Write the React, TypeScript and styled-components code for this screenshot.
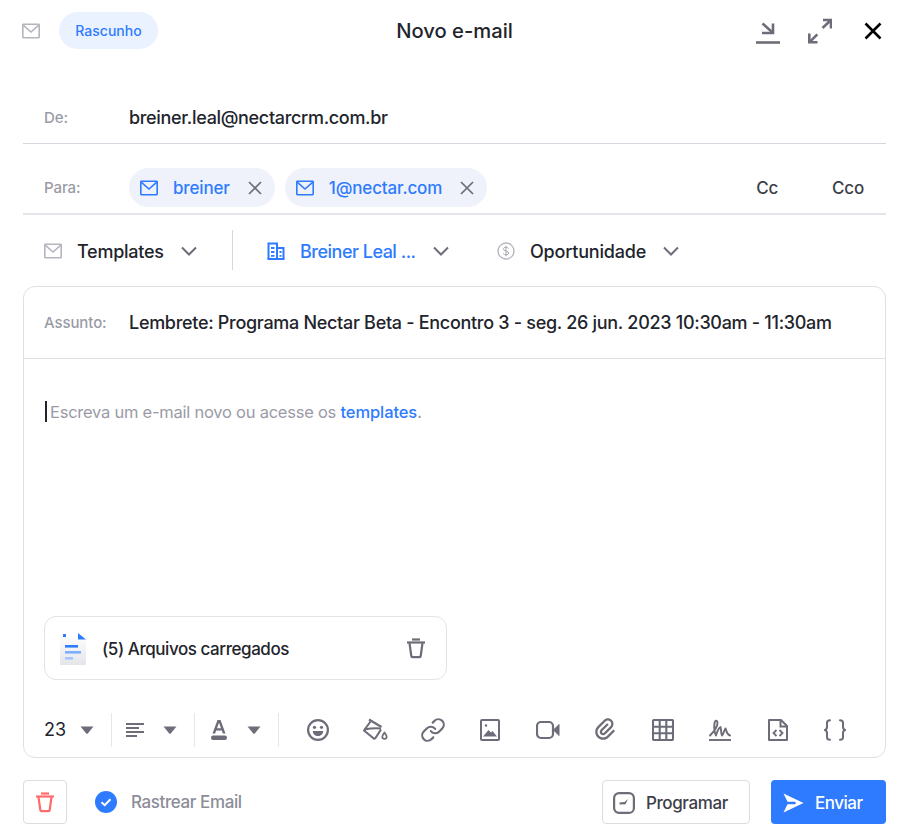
import React from "react";
import styled, { createGlobalStyle } from "styled-components";
import { Link as LinkIcon } from "lucide-react";
import { RiAttachment2 } from "react-icons/ri";

const Global = createGlobalStyle`
  html, body { margin: 0; padding: 0; background: #fff; }
  body { font-family: Inter, "Liberation Sans", sans-serif; color: #22242c; }
  * { box-sizing: border-box; }
  svg { flex: none; display: block; }
`;

const Page = styled.div`
  width: 907px;
  height: 839px;
  padding: 0 21px 0 23px;
  overflow: hidden;
`;

const Header = styled.header`
  height: 61px;
  display: flex;
  align-items: center;
  margin-bottom: 31px;
`;

const HeaderLeft = styled.div`
  display: flex;
  align-items: center;
  gap: 19px;
  flex: 1;
  margin-left: -1px;
`;

const Pill = styled.span`
  width: 99px;
  height: 37px;
  border-radius: 19px;
  background: #ebf2ff;
  color: #2e7bff;
  font-size: 14px;
  font-weight: 500;
  display: flex;
  align-items: center;
  justify-content: center;
`;

const Title = styled.h1`
  margin: 0 0 0 4px;
  font-size: 20.2px;
  line-height: 24px;
  font-weight: 500;
  flex: none;
  width: 300px;
  text-align: center;
  color: #22242c;
`;

const HeaderRight = styled.div`
  flex: 1;
  display: flex;
  justify-content: flex-end;
  align-items: center;
  gap: 28px;
  padding-right: 3px;
`;

const CloseButton = styled.span`
  margin-left: 3px;
`;

const FieldRow = styled.div<{ $h: number; $thick?: boolean; $pt?: number }>`
  height: ${(p) => p.$h}px;
  padding-top: ${(p) => p.$pt ?? 0}px;
  display: flex;
  align-items: center;
  border-bottom: ${(p) => (p.$thick ? "2px solid #e4e4ea" : "1px solid #d6d6de")};
`;

const Label = styled.span`
  width: 106px;
  padding-left: 21px;
  font-size: 15px;
  letter-spacing: -0.1px;
  font-weight: 500;
  color: #9a9ba6;
  flex: none;
`;

const Value = styled.span`
  font-size: 18px;
  letter-spacing: -0.32px;
  font-weight: 500;
  color: #22242c;
  white-space: nowrap;
`;

const Chips = styled.div`
  display: flex;
  gap: 10px;
  flex: 1;
`;

const Chip = styled.div`
  height: 39px;
  border-radius: 20px;
  background: #eff2fa;
  padding: 0 12px 0 11px;
  display: flex;
  align-items: center;
  color: #2e7bff;
  font-size: 17px;
  letter-spacing: -0.15px;
  font-weight: 500;
  gap: 15px;
`;

const ChipClose = styled.span`
  display: flex;
  margin-left: 2px;
  color: #6c6d78;
`;

const CopyLinks = styled.div`
  display: flex;
  gap: 54px;
  padding-right: 22px;
  font-size: 17px;
  letter-spacing: -0.2px;
  font-weight: 500;
  color: #3d3e48;
`;

const SelectRow = styled.div`
  height: 55px;
  padding: 15px 0 0 21px;
  display: flex;
  align-items: flex-start;
  margin-bottom: 16px;
`;

const Select = styled.div<{ $blue?: boolean; $w: number; $ls: number }>`
  width: ${(p) => p.$w}px;
  flex: none;
  height: 42px;
  display: flex;
  align-items: center;
  gap: 15px;
  font-size: 18px;
  letter-spacing: ${(p) => p.$ls}px;
  font-weight: 500;
  white-space: nowrap;
  color: ${(p) => (p.$blue ? "#2e7bff" : "#22242c")};
`;

const ChevronWrap = styled.span`
  margin-left: 2px;
`;

const SelectDivider = styled.div`
  width: 1px;
  height: 40px;
  background: #d6d6de;
  margin: 0 34px 0 0;
  flex: none;
`;

const Card = styled.section`
  height: 472px;
  border: 1.5px solid #dfdfe6;
  border-radius: 12px;
  display: flex;
  flex-direction: column;
`;

const Subject = styled.div`
  height: 72px;
  flex: none;
  display: flex;
  align-items: center;
  border-bottom: 1.5px solid #dfdfe6;
`;

const SubjectLabel = styled(Label)`
  padding-left: 20px;
  width: 105px;
`;

const SubjectValue = styled.span`
  font-size: 18px;
  letter-spacing: -0.3px;
  font-weight: 500;
  white-space: nowrap;
  color: #22242c;
`;

const Editor = styled.div`
  flex: 1;
  padding: 42px 20px 0;
  font-size: 16.5px;
  letter-spacing: -0.24px;
  line-height: 20px;
  color: #9a9ba6;
  display: flex;
  flex-direction: column;
`;

const Placeholder = styled.div`
  display: flex;
  align-items: center;
  white-space: pre;
`;

const Caret = styled.span`
  display: inline-block;
  width: 2px;
  height: 21px;
  background: #22242c;
  margin: 0 3px 0 1px;
`;

const TemplateLink = styled.span`
  color: #2e7bff;
  font-weight: 500;
  letter-spacing: -0.1px;
`;

const FileCard = styled.div`
  margin-top: auto;
  margin-bottom: 20px;
  width: 403px;
  height: 64px;
  border: 1.5px solid #e2e2e9;
  border-radius: 12px;
  padding: 0 20px 0 15px;
  display: flex;
  align-items: center;
`;

const FileName = styled.span`
  margin-left: 16px;
  padding-top: 2px;
  font-size: 17px;
  letter-spacing: -0.44px;
  font-weight: 500;
  color: #22242c;
  flex: 1;
`;

const Toolbar = styled.div`
  height: 57px;
  flex: none;
  display: flex;
  align-items: center;
  padding: 2px 0 0 20px;
`;

const ToolGroup = styled.div<{ $w: number; $pl?: number }>`
  width: ${(p) => p.$w}px;
  height: 34px;
  flex: none;
  display: flex;
  align-items: center;
  justify-content: space-between;
  padding: 0 17px 0 ${(p) => p.$pl ?? 0}px;
  border-right: 1.5px solid #e6e6ec;
`;

const FontSize = styled.span`
  font-size: 18px;
  color: #22242c;
`;

const ToolIcon = styled.div`
  width: 57.5px;
  height: 34px;
  flex: none;
  display: flex;
  align-items: center;
  justify-content: center;
  color: #6c6d78;
`;

const ToolIcons = styled.div`
  display: flex;
  margin-left: 10px;
`;

const Footer = styled.footer`
  margin-top: 22px;
  display: flex;
  align-items: center;
  height: 44px;
`;

const TrashButton = styled.button`
  width: 44px;
  height: 44px;
  padding: 0;
  border: 1.5px solid #dcdce3;
  border-radius: 4px;
  background: #fff;
  display: flex;
  align-items: center;
  justify-content: center;
`;

const Track = styled.div`
  margin-left: 28px;
  display: flex;
  align-items: center;
  gap: 14px;
  flex: 1;
  font-size: 17px;
  letter-spacing: -0.4px;
  font-weight: 500;
  color: #8c8d98;
`;

const ScheduleButton = styled.button`
  width: 148px;
  height: 44px;
  border: 1.5px solid #dcdce3;
  border-radius: 4px;
  background: #fff;
  display: flex;
  align-items: center;
  gap: 11px;
  font: 500 17px Inter, sans-serif;
  letter-spacing: -0.4px;
  color: #3d3e48;
  padding: 1px 0 0 10px;
`;

const SendButton = styled.button`
  width: 115px;
  height: 44px;
  margin-left: 21px;
  border: 0;
  border-radius: 4px;
  background: #2e7bff;
  display: flex;
  align-items: center;
  gap: 11px;
  font: 500 17px Inter, sans-serif;
  letter-spacing: -0.5px;
  color: #fff;
  padding: 1px 0 0 12px;
`;

const GREY = "#6c6d78";

const MailIcon = ({ color = "#b4b5be", sw = 1.6 }: { color?: string; sw?: number }) => (
  <svg width="18" height="18" viewBox="0 0 18 18" fill="none">
    <rect x="0.8" y="2.3" width="16.4" height="13.4" rx="0.6" stroke={color} strokeWidth={sw} />
    <path d="M1.2 3.2 9 10l7.8-6.8" stroke={color} strokeWidth={sw} />
  </svg>
);

const XIcon = ({ size = 16, color = "currentColor", sw = 1.7 }: { size?: number; color?: string; sw?: number }) => (
  <svg width={size} height={size} viewBox="0 0 16 16" fill="none">
    <path d="M2 2l12 12M14 2 2 14" stroke={color} strokeWidth={sw} />
  </svg>
);

const Chevron = () => (
  <svg width="16" height="10" viewBox="0 0 16 10" fill="none">
    <path d="M1 1.5l7 7 7-7" stroke={GREY} strokeWidth="2" />
  </svg>
);

const Minimize = () => (
  <svg width="24" height="26" viewBox="0 0 24 26" fill="none" stroke={GREY}>
    <path d="M6.5 5.5l9.5 8.5" strokeWidth="2.6" />
    <path d="M17 5.500V15H6" strokeWidth="2.6" />
    <path d="M0 24.500h24" strokeWidth="2.6" />
  </svg>
);

const Expand = () => (
  <svg width="24" height="26" viewBox="0 0 24 26" fill="none" stroke={GREY} strokeWidth="2.6">
    <path d="M15 2h8v8.500" />
    <path d="M22.500 2.500l-8 7.500" />
    <path d="M1.300 15.500v8.800h8.200" />
    <path d="M1.800 23.800l7.500-7.500" />
  </svg>
);

const Building = () => (
  <svg width="18" height="18" viewBox="0 0 18 18" fill="none" stroke="#2e7bff" strokeWidth="2">
    <path d="M1.500 17V1.500h8.500V17" />
    <path d="M10 6h6.500v11" />
    <path d="M0.500 17h17" />
    <path d="M4 6h3.500M4 10h3.500M4 13.800h3.500M12.500 10h2M12.500 13.800h2" strokeWidth="1.8" />
  </svg>
);

const Dollar = () => (
  <svg width="18" height="18" viewBox="0 0 18 18" fill="none">
    <circle cx="9" cy="9" r="8" stroke="#b4b5be" strokeWidth="1.3" />
    <path d="M11.500 6.600C11 5.600 10 5.200 9 5.200c-1.500 0-2.500.7-2.500 1.900 0 2.600 5.100 1.300 5.100 3.900 0 1.200-1.100 1.900-2.600 1.900-1.200 0-2.200-.5-2.700-1.500M9 3.800v10.400" stroke="#a4a5b0" strokeWidth="1" />
  </svg>
);

const DocIcon = () => (
  <svg width="26" height="33" viewBox="0 0 26 33">
    <defs>
      <linearGradient id="docbg" x1="0" y1="0" x2="0" y2="1">
        <stop offset="0" stopColor="#ffffff" />
        <stop offset="1" stopColor="#e4e5e9" />
      </linearGradient>
    </defs>
    <path d="M0 2h18l8 7v24H0z" fill="url(#docbg)" />
    <rect x="3" y="2" width="3" height="3" fill="#2e7bff" />
    <path d="M18 1l8 6.500h-8z" fill="#2e7bff" />
    <rect x="5" y="13" width="13" height="2.6" fill="#2e7bff" />
    <rect x="5" y="19" width="16" height="2.6" fill="#7fadff" />
    <rect x="5" y="25" width="8" height="2.6" fill="#a5c5ff" />
  </svg>
);

const Trash = ({ color = GREY }: { color?: string }) => (
  <svg width="20" height="21" viewBox="0 0 20 21" fill="none" stroke={color} strokeWidth="2.2">
    <path d="M1 4.500h18" />
    <path d="M6 1.500h8" />
    <path d="M3.500 5l1.800 13c.1.800.6 1.200 1.300 1.200h6.800c.7 0 1.200-.4 1.300-1.200L16.500 5" strokeLinejoin="round" />
  </svg>
);

const Caret3 = () => (
  <svg width="14" height="8" viewBox="0 0 14 8">
    <path d="M0.500 0.500h13L8 7.200a1.300 1.300 0 0 1-2 0z" fill={GREY} />
  </svg>
);

const AlignIcon = () => (
  <svg width="18" height="14" viewBox="0 0 18 14" fill="none" stroke={GREY} strokeWidth="2">
    <path d="M0 1h18M0 5h13M0 9h18M0 13h11" />
  </svg>
);

const FontColor = () => (
  <svg width="18" height="20" viewBox="0 0 18 20">
    <path fillRule="evenodd" d="M2.500 13.500 7.500 0h3l5 13.500h-2.600L11.800 10.400H6.200L5.100 13.500zM7 8.200h4L9 2.800z" fill={GREY} />
    <rect x="1" y="15.500" width="16" height="4.500" rx="2.200" fill={GREY} />
  </svg>
);

const Smile = () => (
  <svg width="24" height="24" viewBox="0 0 24 24" fill="none">
    <circle cx="12" cy="12" r="9.900" stroke={GREY} strokeWidth="2.2" />
    <circle cx="8.500" cy="9.300" r="1.600" fill={GREY} />
    <circle cx="15.500" cy="9.300" r="1.600" fill={GREY} />
    <path d="M6.800 13h10.400c0 3-2.300 5-5.200 5s-5.200-2-5.200-5z" fill={GREY} />
  </svg>
);

const Bucket = () => (
  <svg width="26" height="24" viewBox="0 0 26 24" fill="none" stroke={GREY} strokeWidth="2.1" strokeLinejoin="round">
    <path d="M7 1.500 19.500 9" />
    <path d="M8.500 3.500 2 12.500l9.500 7.800c.7.500 1.500.4 2-.3L19 11.500" />
    <path d="M2.500 11.500c5-1 11-1.500 16.500-1" />
    <path d="M22.500 14.500c1.300 2 2.200 3.100 2.200 4.200a2.200 2.200 0 0 1-4.400 0c0-1.100.9-2.200 2.200-4.200z" strokeWidth="1.7" />
  </svg>
);

const ImageIcon = () => (
  <svg width="20" height="22" viewBox="0 0 20 22" fill="none">
    <rect x="1" y="1" width="18" height="20" rx="1" stroke={GREY} strokeWidth="2" />
    <circle cx="6" cy="6.500" r="1.200" fill={GREY} />
    <path d="M3 17.500l5.500-6.500 2.500 2.500 1.500-1.500 4.500 5.500z" fill={GREY} />
  </svg>
);

const VideoIcon = () => (
  <svg width="24" height="20" viewBox="0 0 24 20" fill="none">
    <rect x="1" y="2" width="16" height="16" rx="4" stroke={GREY} strokeWidth="2.2" />
    <path d="M17.500 10l5.500-5.500v11z" fill={GREY} stroke={GREY} strokeWidth="1" />
  </svg>
);

const TableIcon = () => (
  <svg width="22" height="22" viewBox="0 0 22 22" fill="none" stroke={GREY} strokeWidth="2.1">
    <rect x="1" y="1" width="20" height="20" rx="1" />
    <path d="M1 7.700h20M1 14.300h20M7.700 1v20M14.300 1v20" />
  </svg>
);

const SignIcon = () => (
  <svg width="22" height="22" viewBox="0 0 22 22" fill="none" stroke={GREY} strokeWidth="1.9">
    <path d="M0 21h22" />
    <path d="M1 16.500C4.500 13 8.500 8 8.500 4 8.500 1 6 1 5.500 4.500c-.5 3.500-.3 8.500 1.500 12 1-4 2.500-7 4.500-8.500.8 2 .3 6.500 1.500 8.500 1.500-.5 2-5.500 3.500-7 1 2 1 6 4.500 7" strokeLinecap="round" strokeLinejoin="round" />
  </svg>
);

const FileCode = () => (
  <svg width="20" height="22" viewBox="0 0 20 22" fill="none" stroke={GREY} strokeWidth="2">
    <path d="M1 1h12l6 6v14H1z" strokeLinejoin="round" />
    <path d="M12.500 1.500V7.500h6" />
    <path d="M8.500 11l-3 3 3 3M11.500 11l3 3-3 3" strokeWidth="1.8" />
  </svg>
);

const Braces = () => (
  <svg width="22" height="22" viewBox="0 0 22 22" fill="none" stroke={GREY} strokeWidth="2" strokeLinecap="round">
    <path d="M6 1.200C3.800 1.200 3 2 3 3.800v4c0 1.800-.6 2.700-2 3.200 1.400.5 2 1.400 2 3.200v4c0 1.800.8 2.600 3 2.600" />
    <path d="M16 1.200c2.200 0 3 .8 3 2.600v4c0 1.800.6 2.700 2 3.200-1.400.5-2 1.400-2 3.200v4c0 1.800-.8 2.600-3 2.600" />
  </svg>
);

const CheckCircle = () => (
  <svg width="22" height="22" viewBox="0 0 22 22">
    <circle cx="11" cy="11" r="11" fill="#2e7bff" />
    <path d="M6.500 11.200l3.200 3 5.800-6" fill="none" stroke="#fff" strokeWidth="2" />
  </svg>
);

const ClockSquare = () => (
  <svg width="22" height="22" viewBox="0 0 22 22" fill="none">
    <rect x="1.100" y="1.100" width="19.800" height="19.800" rx="5" stroke={GREY} strokeWidth="2.2" />
    <path d="M6.500 10.500l5-.6L15 7l-2.500 5.300-6 .2z" fill={GREY} />
  </svg>
);

const SendArrow = () => (
  <svg width="21" height="20" viewBox="0 0 21 20">
    <path d="M0.500 0.500 20.500 10 0.500 19.500 4.500 11.200h7.500L13 10l-1-1.200H4.500z" fill="#fff" />
  </svg>
);

export default function App() {
  return (
    <>
      <Global />
      <Page>
        <Header>
          <HeaderLeft>
            <MailIcon />
            <Pill>Rascunho</Pill>
          </HeaderLeft>
          <Title>Novo e-mail</Title>
          <HeaderRight>
            <Minimize />
            <Expand />
            <CloseButton><XIcon size={20} color="#000" sw={2.1} /></CloseButton>
          </HeaderRight>
        </Header>

        <FieldRow $h={52}>
          <Label>De:</Label>
          <Value>breiner.leal@nectarcrm.com.br</Value>
        </FieldRow>

        <FieldRow $h={71} $thick $pt={18}>
          <Label>Para:</Label>
          <Chips>
            <Chip>
              <MailIcon color="#2e7bff" />
              breiner
              <ChipClose><XIcon /></ChipClose>
            </Chip>
            <Chip>
              <MailIcon color="#2e7bff" />
              1@nectar.com
              <ChipClose><XIcon /></ChipClose>
            </Chip>
          </Chips>
          <CopyLinks>
            <span>Cc</span>
            <span>Cco</span>
          </CopyLinks>
        </FieldRow>

        <SelectRow>
          <Select $w={188} $ls={-0.25}>
            <MailIcon />
            Templates
            <ChevronWrap><Chevron /></ChevronWrap>
          </Select>
          <SelectDivider />
          <Select $w={230} $blue $ls={-0.5}>
            <Building />
            Breiner Leal ...
            <ChevronWrap><Chevron /></ChevronWrap>
          </Select>
          <Select $w={200} $ls={-0.2}>
            <Dollar />
            Oportunidade
            <ChevronWrap><Chevron /></ChevronWrap>
          </Select>
        </SelectRow>

        <Card>
          <Subject>
            <SubjectLabel>Assunto:</SubjectLabel>
            <SubjectValue>Lembrete: Programa Nectar Beta - Encontro 3 - seg. 26 jun. 2023 10:30am - 11:30am</SubjectValue>
          </Subject>
          <Editor>
            <Placeholder>
              <Caret />
              Escreva um e-mail novo ou acesse os <TemplateLink>templates</TemplateLink>.
            </Placeholder>
            <FileCard>
              <DocIcon />
              <FileName>(5) Arquivos carregados</FileName>
              <Trash />
            </FileCard>
          </Editor>
          <Toolbar>
            <ToolGroup $w={68}>
              <FontSize>23</FontSize>
              <Caret3 />
            </ToolGroup>
            <ToolGroup $w={83} $pl={14}>
              <AlignIcon />
              <Caret3 />
            </ToolGroup>
            <ToolGroup $w={84} $pl={15}>
              <FontColor />
              <Caret3 />
            </ToolGroup>
            <ToolIcons>
              <ToolIcon><Smile /></ToolIcon>
              <ToolIcon><Bucket /></ToolIcon>
              <ToolIcon><LinkIcon size={26} strokeWidth={2} /></ToolIcon>
              <ToolIcon><ImageIcon /></ToolIcon>
              <ToolIcon><VideoIcon /></ToolIcon>
              <ToolIcon><RiAttachment2 size={27} /></ToolIcon>
              <ToolIcon><TableIcon /></ToolIcon>
              <ToolIcon><SignIcon /></ToolIcon>
              <ToolIcon><FileCode /></ToolIcon>
              <ToolIcon><Braces /></ToolIcon>
            </ToolIcons>
          </Toolbar>
        </Card>

        <Footer>
          <TrashButton><Trash color="#ff6b6b" /></TrashButton>
          <Track>
            <CheckCircle />
            Rastrear Email
          </Track>
          <ScheduleButton>
            <ClockSquare />
            Programar
          </ScheduleButton>
          <SendButton>
            <SendArrow />
            Enviar
          </SendButton>
        </Footer>
      </Page>
    </>
  );
}
